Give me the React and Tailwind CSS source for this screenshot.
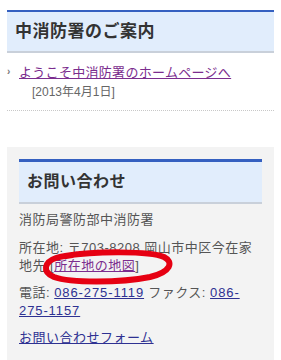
import React from "react";

export default function App() {
  return (
    <div
      className="relative w-[281px] h-[360px] overflow-hidden bg-white text-[#555]"
      style={{ fontFamily: '"Liberation Sans", "Noto Sans CJK JP", sans-serif' }}
    >
      <div className="px-[7px] pt-[10px]">
        <section>
          <h2 className="flex h-[43px] items-center border-t-2 border-b-2 border-t-[#3560c0] border-b-[#c9d0da] bg-[#e1edfc] pl-2 text-[17px] font-bold tracking-[0.5px] text-[#333]">
            中消防署のご案内
          </h2>
          <ul className="mt-[10px] border-b border-dotted border-[#c8c8c8] pb-[9px]">
            <li className="flex items-start leading-[18px]">
              <span className="w-[12px] text-[10px] font-bold text-[#777]">›</span>
              <div>
                <a href="#" className="text-[13px] tracking-[0.3px] text-[#7b2d8e] underline">
                  ようこそ中消防署のホームページへ
                </a>
                <div className="pl-[13px] pt-[1px] text-[12px] text-[#666]">[2013年4月1日]</div>
              </div>
            </li>
          </ul>
        </section>

        <section className="mt-[36px] bg-[#f3f3f3] px-3 pt-3 pb-6">
          <h2 className="flex h-[45px] items-center border-t-[3px] border-b-2 border-t-[#3560c0] border-b-[#c9d0da] bg-[#e1edfc] pl-2 text-[16px] font-bold tracking-[0.5px] text-[#333]">
            お問い合わせ
          </h2>
          <div className="mt-[7px] text-[13px] leading-[18px] tracking-[0.5px]">
            <p>消防局警防部中消防署</p>
            <p className="mt-[10px]">
              所在地: 〒703-8208 岡山市中区今在家地先 [<a href="#" className="text-[#7b2d8e] underline">所在地の地図</a>]
            </p>
            <p className="mt-[9px]">
              電話: <a href="#" className="tracking-[0.9px] text-[#2e3192] underline">086-275-1119</a> ファクス:{" "}
              <a href="#" className="tracking-[0.9px] text-[#2e3192] underline">
                086-
                <br />
                275-1157
              </a>
            </p>
            <p className="mt-[9px]">
              <a href="#" className="text-[#2e3192] underline">お問い合わせフォーム</a>
            </p>
          </div>
        </section>
      </div>

      <svg
        className="pointer-events-none absolute left-0 top-0"
        width="281"
        height="360"
        viewBox="0 0 281 360"
      >
        <path
          d="M66 256 C 95 251, 150 251, 164 257 C 174 262, 171 272, 150 277 C 120 283, 70 283, 54 277 C 42 272, 44 262, 56 258 C 62 256, 70 255, 80 254"
          fill="none"
          stroke="#e60012"
          strokeWidth="6"
          strokeLinecap="round"
        />
      </svg>
    </div>
  );
}
